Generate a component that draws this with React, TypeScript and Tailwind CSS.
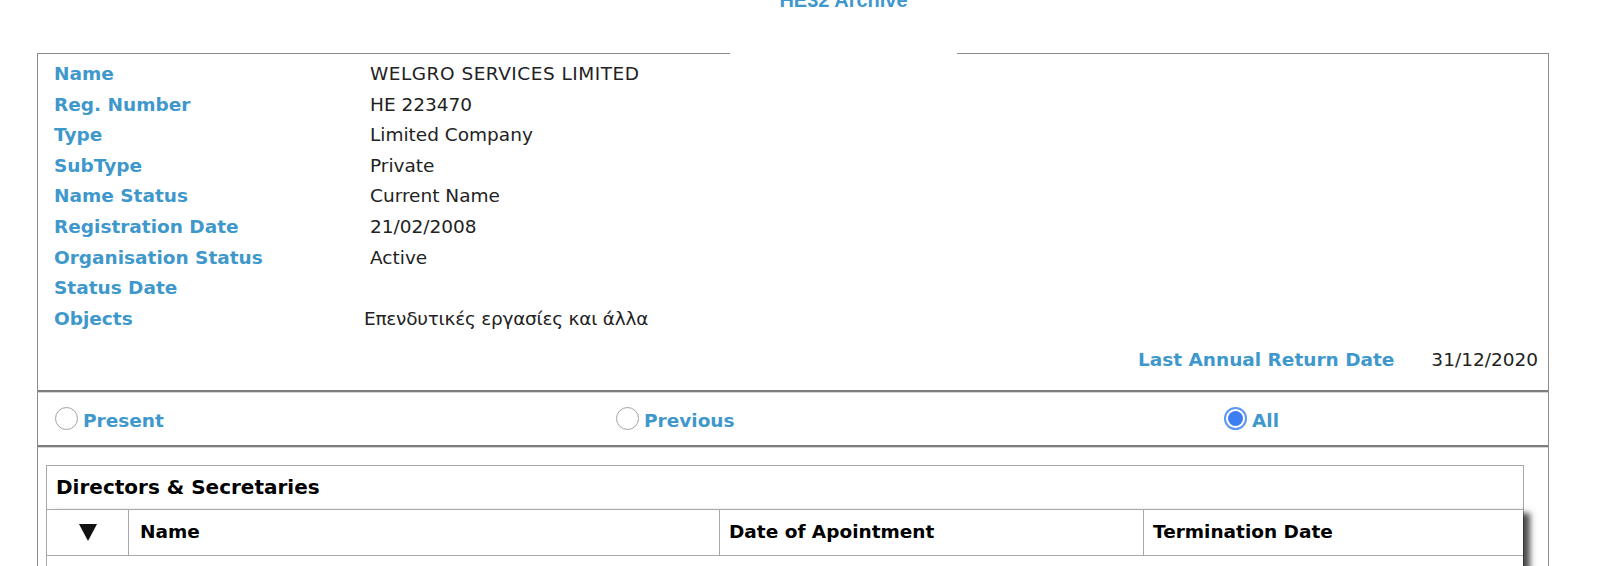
import React from "react";

const LABEL = "font-bold text-[#3f98cc]";

const DETAILS: { label: string; value: string; cls?: string }[] = [
  { label: "Name", value: "WELGRO SERVICES LIMITED", cls: "tracking-[0.5px]" },
  { label: "Reg. Number", value: "HE 223470" },
  { label: "Type", value: "Limited Company" },
  { label: "SubType", value: "Private" },
  { label: "Name Status", value: "Current Name" },
  { label: "Registration Date", value: "21/02/2008" },
  { label: "Organisation Status", value: "Active" },
  { label: "Status Date", value: "" },
  { label: "Objects", value: "Επενδυτικές εργασίες και άλλα", cls: "-ml-[6px] tracking-[-0.25px]" },
];

function Radio({ checked }: { checked?: boolean }) {
  if (checked) {
    return (
      <span className="flex h-[23px] w-[23px] items-center justify-center rounded-full border-2 border-[#5b97f3] bg-white">
        <span className="h-[15px] w-[15px] rounded-full bg-[#3b7ff2]" />
      </span>
    );
  }
  return <span className="block h-[23px] w-[23px] rounded-full border border-[#a3a3a3] bg-white" />;
}

function Divider() {
  return <div className="h-[3px] border-t-2 border-b border-t-[#7d7d7d] border-b-[#d6d6d6]" />;
}

export default function App() {
  return (
    <div className="h-[566px] w-[1622px] overflow-hidden bg-white font-['DejaVu_Sans',Verdana,sans-serif] text-[18.5px] text-[#222]">
      <div className="ml-[37px] w-[1512px]">
        {/* fieldset-like top edge with the archive title in the gap */}
        <div className="flex h-[54px] items-end">
          <div className="h-px w-[693px] bg-[#8c8c8c]" />
          <div className="relative h-full w-[227px]">
            <div className="-mt-[10px] text-center font-['Liberation_Sans',Arial,sans-serif] text-[20px] font-bold leading-[20px] text-[#3f98cc]">
              HE32 Archive
            </div>
          </div>
          <div className="h-px flex-1 bg-[#8c8c8c]" />
        </div>

        <div className="border-x border-[#8c8c8c] pt-[5px]">
          <div className="pl-[16px] leading-[30.6px]">
            {DETAILS.map((d) => (
              <div key={d.label} className="grid grid-cols-[316px_1fr]">
                <span className={LABEL}>{d.label}</span>
                <span className={d.cls ?? ""}>{d.value}</span>
              </div>
            ))}
          </div>

          <div className="mt-[11px] flex justify-end gap-[37px] pr-[10px] leading-[30.4px]">
            <span className={LABEL}>Last Annual Return Date</span>
            <span>31/12/2020</span>
          </div>

          <div className="mt-[14px]">
            <Divider />
          </div>

          <div className="flex h-[52px] items-center pl-[17px]">
            <label className="flex w-[561px] items-center gap-[5px]">
              <Radio />
              <span className={`${LABEL} pt-[4px]`}>Present</span>
            </label>
            <label className="flex w-[608px] items-center gap-[5px]">
              <Radio />
              <span className={`${LABEL} pt-[4px]`}>Previous</span>
            </label>
            <label className="flex items-center gap-[5px]">
              <Radio checked />
              <span className={`${LABEL} pt-[4px]`}>All</span>
            </label>
          </div>

          <Divider />

          <div className="ml-[8px] mr-[24px] mt-[17px] border border-b-0 border-[#a8a8a8]">
            <div className="flex h-[43px] items-center pl-[9px] text-[20px] font-bold text-black">
              Directors &amp; Secretaries
            </div>
            <div className="shadow-[7px_4px_6px_rgba(0,0,0,0.7)]">
              <div className="grid h-[47px] grid-cols-[81px_591px_424px_1fr] border-y border-[#a8a8a8] font-bold text-black">
                <div className="flex items-center justify-center">
                  <svg width="20" height="19" viewBox="0 0 20 19">
                    <polygon points="1,1 19,1 10,18" fill="#111" />
                  </svg>
                </div>
                <div className="flex items-center border-l border-[#a8a8a8] pl-[11px]">Name</div>
                <div className="flex items-center border-l border-[#a8a8a8] pl-[9px]">Date of Apointment</div>
                <div className="flex items-center border-l border-[#a8a8a8] pl-[9px]">Termination Date</div>
              </div>
              <div className="h-[40px] bg-white" />
            </div>
          </div>
        </div>
      </div>
    </div>
  );
}
